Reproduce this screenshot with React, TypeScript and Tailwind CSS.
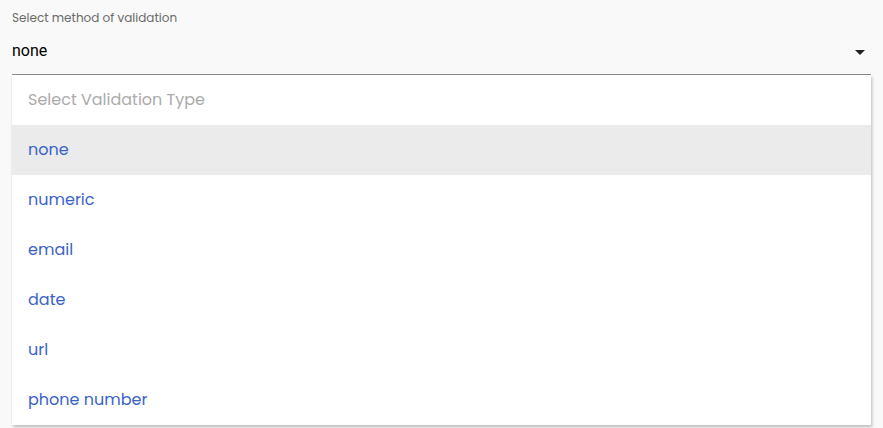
export default function App() {
  const options = ["none", "numeric", "email", "date", "url", "phone number"];
  const selected = "none";

  return (
    <main
      className="h-[428px] w-[883px] overflow-hidden bg-[#f9f9f9] px-3"
      style={{ fontFamily: "Poppins, 'Noto Sans', sans-serif" }}
    >
      <div className="pt-[10px] text-[12px] leading-[16px] text-[#6b6b6b]">
        Select method of validation
      </div>
      <div className="mt-[15px] flex h-[34px] items-start justify-between border-b border-[#8a8a8a] pr-[6px]">
        <span
          className="text-[16px] leading-[20px] text-black"
          style={{ fontFamily: "Roboto, sans-serif" }}
        >
          none
        </span>
        <svg width="10" height="5" viewBox="0 0 10 5" className="mt-[9px]">
          <path d="M0 0h10L5 5z" fill="#222" />
        </svg>
      </div>
      <ul className="bg-white shadow-[1px_2px_3px_rgba(0,0,0,0.25)]">
        <li className="flex h-[50px] items-center px-4 text-[16px] text-[#ababab]">
          Select Validation Type
        </li>
        {options.map((opt) => (
          <li
            key={opt}
            className={
              "flex h-[50px] items-center px-4 text-[16px] text-[#3a63c8] " +
              (opt === selected ? "bg-[#ebebeb]" : "")
            }
          >
            {opt}
          </li>
        ))}
      </ul>
    </main>
  );
}
